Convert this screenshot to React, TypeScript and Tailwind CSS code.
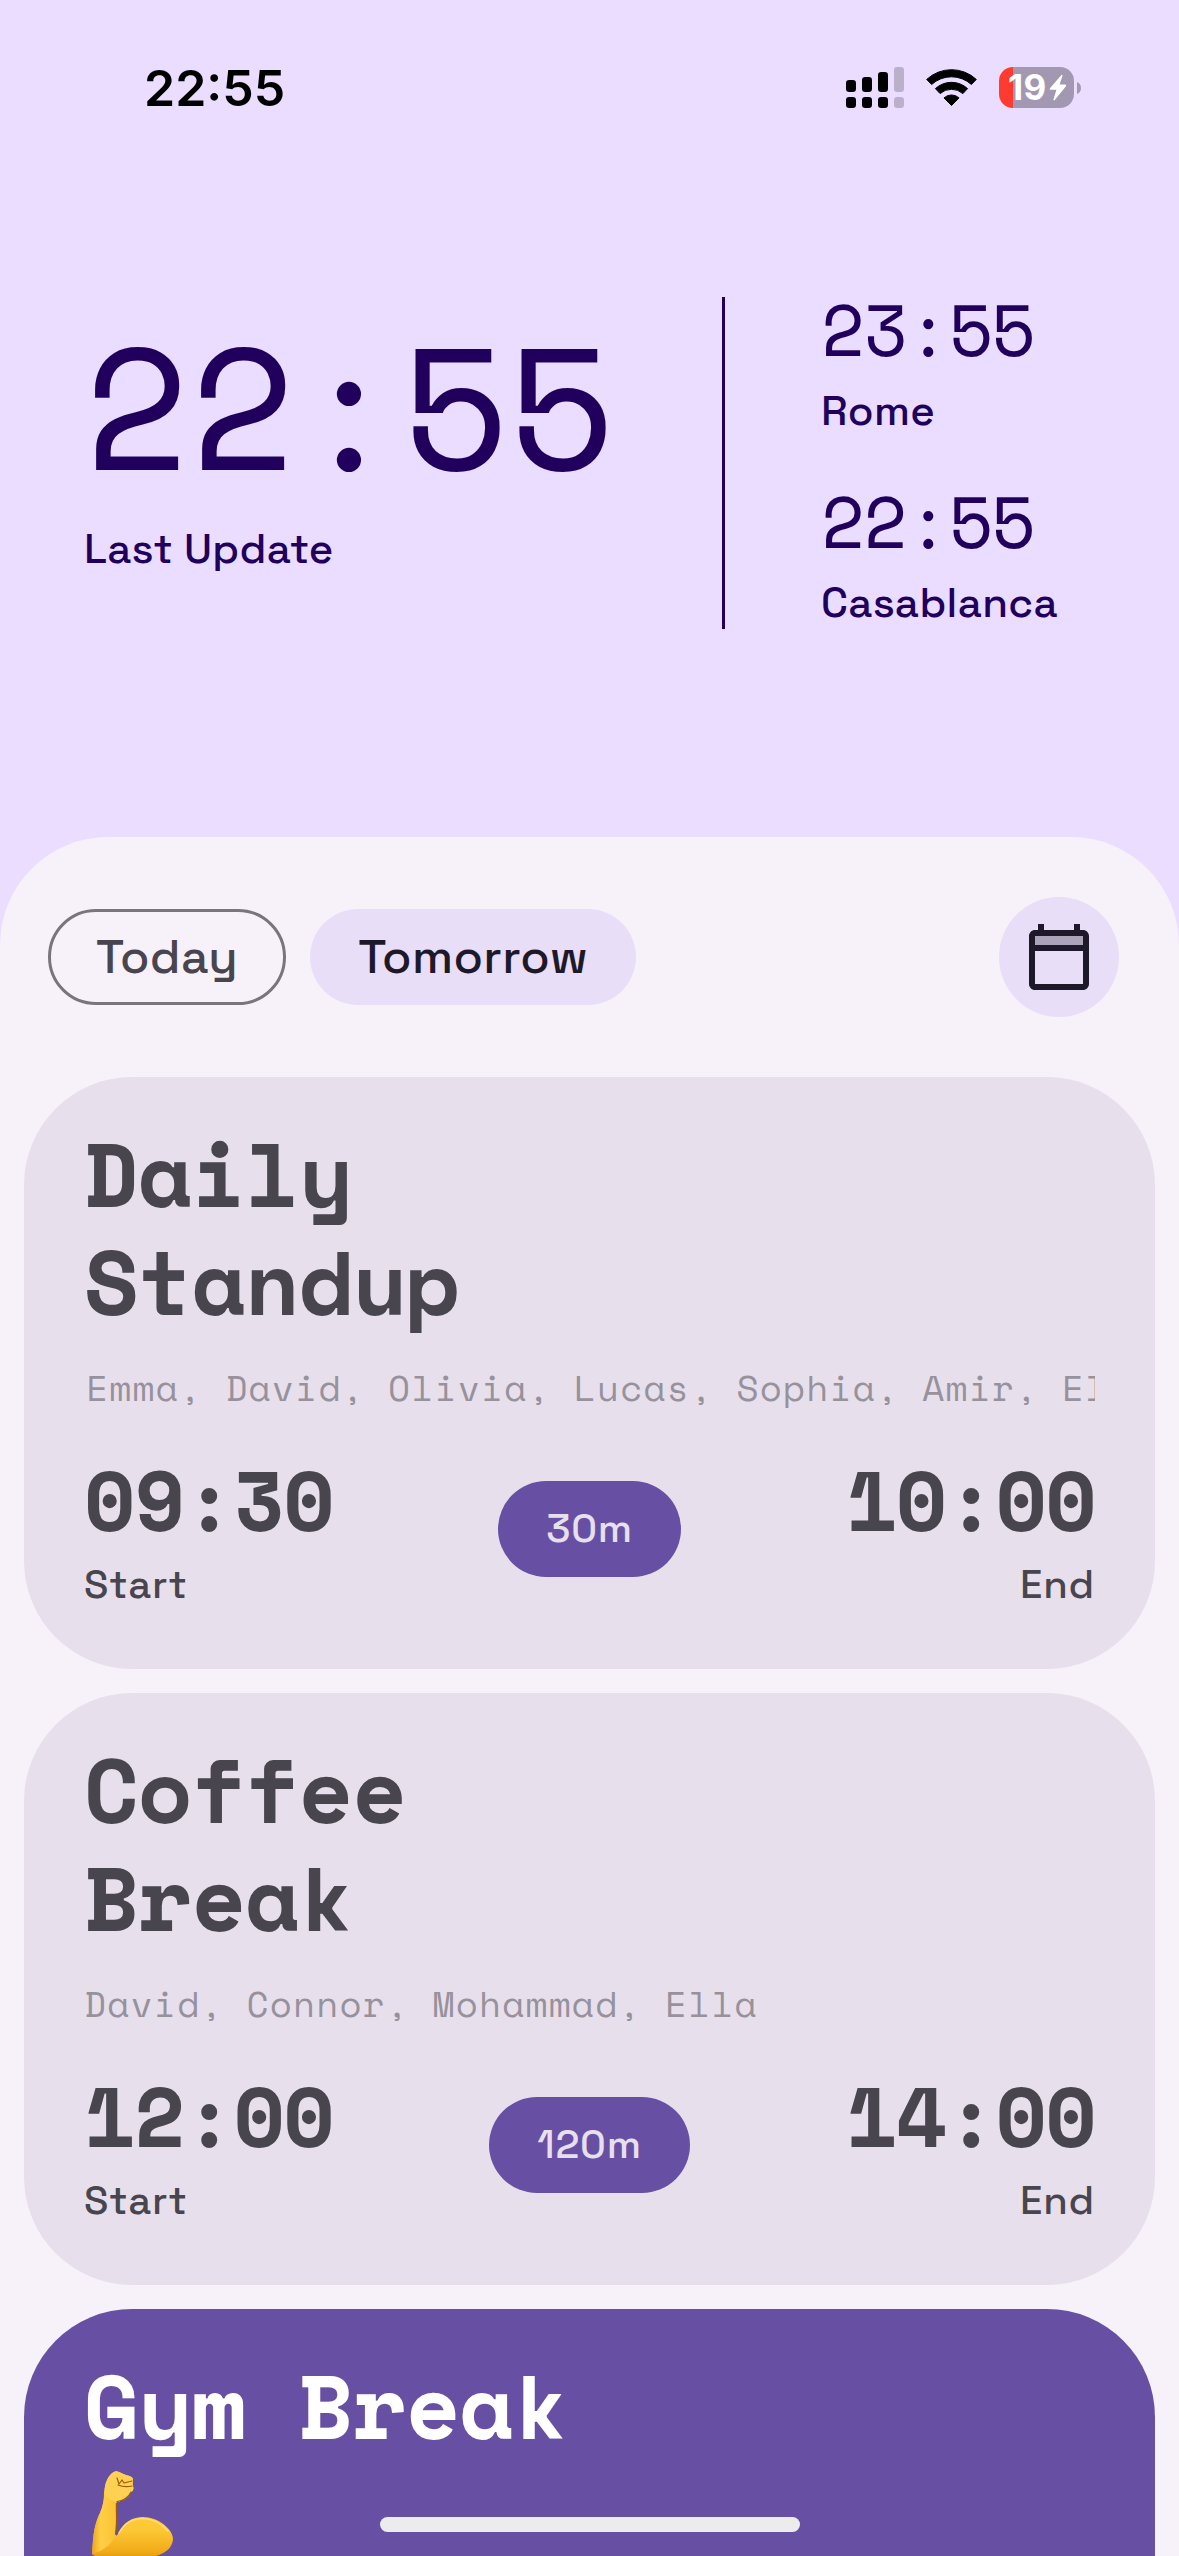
import React from "react";

type Tone = "muted" | "primary";

interface Meeting {
  title: React.ReactNode;
  people: string;
  start: string;
  end: string;
  duration: string;
  tone: Tone;
  scrolled?: boolean;
}

const MONO = "font-['Space_Mono','Liberation_Mono',monospace]";
const SANS = "font-['Space_Grotesk',Inter,sans-serif]";

function SignalIcon() {
  const bars = [
    { x: 0, y: 13, o: 1 },
    { x: 16, y: 10, o: 1 },
    { x: 32, y: 5, o: 1 },
    { x: 48, y: 0, o: 0.2 },
  ];
  return (
    <svg width="58" height="41" viewBox="0 0 58 41">
      {bars.map((b) => (
        <g key={b.x} opacity={b.o}>
          <rect x={b.x} y={b.y} width="10" height={25 - b.y} rx="3.2" />
          <rect x={b.x} y="30" width="10" height="11" rx="3.2" />
        </g>
      ))}
    </svg>
  );
}

function WifiIcon() {
  return (
    <svg width="51" height="38" viewBox="0 0 51 38" strokeLinejoin="round" stroke="#000" strokeWidth="1">
      <path d="M0.7 10.4A36.5 36.5 0 0 1 50.3 10.4L45.4 15.5A29.6 29.6 0 0 0 5.6 15.5Z" />
      <path d="M9.4 19.6A23.8 23.8 0 0 1 41.6 19.6L36.9 24.6A17.2 17.2 0 0 0 14.1 24.6Z" />
      <path d="M18 28.9A11 11 0 0 1 33 28.9L25.5 36.5Z" />
    </svg>
  );
}

function Battery() {
  return (
    <div className="flex items-center gap-[3px]">
      <div className="flex h-[41px] w-[75px] items-center overflow-hidden rounded-[14px] bg-[linear-gradient(90deg,#ff3b30_14px,#a398b2_14px)] pl-[9px] text-white">
        <span className="font-[Inter,sans-serif] text-[35px] leading-[41px] font-bold tracking-[0.5px]">19</span>
        <svg className="ml-[2px] shrink-0" width="18" height="27" viewBox="0 0 18 27">
          <path
            d="M12.4 1 0.8 14.4Q0.2 15.6 1.4 15.8H7.4L4.4 25.4Q4.6 26.8 5.8 26L17 12.2Q17.6 10.8 16.2 10.6H10.6L13.6 1.6Q13.2 0.4 12.4 1Z"
            fill="#fff"
          />
        </svg>
      </div>
      <svg width="4" height="14" viewBox="0 0 4 14">
        <path d="M0 1C5.300 2.500 5.300 11.500 0 13Z" fill="#a398b2" />
      </svg>
    </div>
  );
}

function StatusBar() {
  return (
    <div className="flex items-start justify-between pr-[98px] pl-[144px] text-black">
      <span className="mt-[58px] font-[Inter,sans-serif] text-[50px] leading-[60px] font-semibold">
        22:55
      </span>
      <div className="mt-[67px] flex h-[41px] items-center">
        <SignalIcon />
        <div className="ml-[22px]">
          <WifiIcon />
        </div>
        <div className="ml-[22px]">
          <Battery />
        </div>
      </div>
    </div>
  );
}

function CityClock({ time, city }: { time: string; city: string }) {
  return (
    <div className="flex flex-col gap-4">
      <span className={`${MONO} text-[72px] leading-[72px] tracking-[-1.5px]`}>{time}</span>
      <span className={`${SANS} text-[42px] leading-[60px] font-medium tracking-[0.3px]`}>{city}</span>
    </div>
  );
}

function Clocks() {
  return (
    <div className="flex h-[332px] items-center pl-[84px] text-[#21005d]">
      <div className="flex w-[638px] flex-col gap-7 pb-[30px]">
        <span className={`${MONO} text-[173px] leading-[173px] tracking-[0.1px]`}>22:55</span>
        <span className={`${SANS} text-[42px] leading-[60px] font-medium tracking-[0.3px]`}>Last Update</span>
      </div>
      <div className="mr-24 h-full w-[3px] bg-[#21005d]" />
      <div className="flex flex-col gap-11">
        <CityClock time="23:55" city="Rome" />
        <CityClock time="22:55" city="Casablanca" />
      </div>
    </div>
  );
}

function CalendarIcon() {
  return (
    <svg width="72" height="72" viewBox="0 0 24 24" shapeRendering="geometricPrecision">
      <path d="M4 5h16v3H4z" fill="#1d192b" fillOpacity="0.3" />
      <path
        fill="#1d192b"
        fillRule="evenodd"
        d="M5 1h2v2h10V1h2v2h1c1.100 0 2 .9 2 2v16c0 1.100-.9 2-2 2H4c-1.100 0-2-.9-2-2V5c0-1.100.9-2 2-2h1zM4 5v3h16V5zM4 10v11h16V10z"
      />
    </svg>
  );
}

function Toolbar() {
  return (
    <div className="flex h-[120px] items-center justify-between pr-[60px] pl-12">
      <div className={`${SANS} flex gap-6 text-[48px] leading-[60px] font-medium tracking-[0.35px]`}>
        <button className="flex h-24 items-center rounded-full border-[3px] border-[#79747e] px-[45px] text-[#49454f]">
          Today
        </button>
        <button className="flex h-24 items-center rounded-full bg-[#e8def8] px-12 text-[#1d192b]">Tomorrow</button>
      </div>
      <button className="flex size-[120px] items-center justify-center rounded-full bg-[#e8def8]">
        <CalendarIcon />
      </button>
    </div>
  );
}

function TimeLabel({ time, label, right }: { time: string; label: string; right?: boolean }) {
  return (
    <div className={right ? "flex flex-col items-end" : "flex flex-col items-start"}>
      <span className={`${MONO} text-[84px] leading-[84px] font-bold tracking-[-1.6px]`}>{time}</span>
      <span className={`${SANS} mt-5 text-[40px] leading-[48px] font-medium tracking-[0.8px]`}>{label}</span>
    </div>
  );
}

function MeetingCard({ m }: { m: Meeting }) {
  return (
    <div
      className={
        m.tone === "muted"
          ? "h-[592px] shrink-0 rounded-[108px] bg-[#e7e0ec] px-[60px] pt-[42px] text-[#49454f]"
          : "h-[592px] shrink-0 rounded-[108px] bg-[#6750a4] px-[60px] pt-[42px] text-white"
      }
    >
      <h2 className={`${MONO} h-[216px] text-[90px] leading-[108px] font-bold tracking-[-1.5px]`}>{m.title}</h2>
      <p
        className={`${MONO} mt-[26px] overflow-hidden text-[36px] leading-[54px] tracking-[1.2px] whitespace-nowrap opacity-50 ${m.scrolled ? "pl-[2px]" : ""}`}
      >
        {m.people}
      </p>
      <div className="mt-[42px] grid grid-cols-[1fr_auto_1fr] items-start">
        <TimeLabel time={m.start} label="Start" />
        <span
          className={`${SANS} mt-6 flex h-24 items-center rounded-full bg-[#6750a4] px-12 text-[40px] font-medium tracking-[0.75px] text-[#e7e0ec]`}
        >
          {m.duration}
        </span>
        <TimeLabel time={m.end} label="End" right />
      </div>
    </div>
  );
}

function FlexedArm() {
  return (
    <svg className="mt-3 ml-[7px] block" width="84" height="92" viewBox="0 0 84 92" role="img" aria-label="Flexed biceps">
      <defs>
        <linearGradient id="skin" x1="0" y1="0" x2="0" y2="1">
          <stop offset="0" stopColor="#ffd04a" />
          <stop offset="0.65" stopColor="#fdc835" />
          <stop offset="0.9" stopColor="#f0aa18" />
          <stop offset="1" stopColor="#d98a0a" />
        </linearGradient>
        <linearGradient id="forearm" x1="0" y1="0" x2="1" y2="0">
          <stop offset="0" stopColor="#eda51a" />
          <stop offset="0.35" stopColor="#ffce45" />
          <stop offset="1" stopColor="#fbc234" />
        </linearGradient>
      </defs>
      <path
        d="M1 83C2 66 3 54 9 42C12 35 13 29 13 22C14 12 18 3 24 0.500C27 -0.500 31 3 35 4C39 5 42 6 42 9C42 11 41 12 42 15C43 18 42 20 40 21C38 27 31 30 26 31C24 38 26 50 24 62C25 66 26 65 28 61C33 51 42 46 52 46C67 46 82 58 82 68C81 80 70 84 56 88C38 92 10 91 1 83Z"
        fill="url(#skin)"
      />
      <path
        d="M1 83C2 66 3 54 9 42C12 35 13 29 14 22C18 28 22 30 26 31C24 38 26 50 24 65C22 71 17 76 9 80Z"
        fill="url(#forearm)"
      />
      <path
        d="M14 15C15 9 19 2 24 0.500C27 -0.500 31 3 35 4C39 5 42 6 42 9C42 11 41 12 42 15C43 18 42 20 40 21C38 27 31 30 26 31C20 30 15 26 13.500 22Z"
        fill="#ffd152"
      />
      <path
        d="M26 7L28 13L31 9L33 12L41 10M27 14C32 16 36 16 41 15M26 30.500C32 30 38 26 40 21M25.500 32C25 42 26.500 52 24.500 63"
        fill="none"
        stroke="#9c5a05"
        strokeWidth="1.200"
        strokeLinecap="round"
        strokeLinejoin="round"
      />
      <path d="M28 62C34 51 43 47.500 52 47.500C62 48 71 53 77 60" fill="none" stroke="#ffdc70" strokeWidth="1.500" strokeLinecap="round" />
    </svg>
  );
}

const meetings: Meeting[] = [
  {
    title: (
      <>
        Daily
        <br />
        Standup
      </>
    ),
    people: "Emma, David, Olivia, Lucas, Sophia, Amir, Ella",
    start: "09:30",
    end: "10:00",
    duration: "30m",
    tone: "muted",
    scrolled: true,
  },
  {
    title: (
      <>
        Coffee
        <br />
        Break
      </>
    ),
    people: "David, Connor, Mohammad, Ella",
    start: "12:00",
    end: "14:00",
    duration: "120m",
    tone: "muted",
  },
];

export default function App() {
  return (
    <div className="relative flex h-[2556px] w-[1179px] flex-col overflow-hidden bg-[#eaddff]">
      <div className="h-[297px] shrink-0">
        <StatusBar />
      </div>
      <Clocks />
      <main className="mt-[208px] flex h-[1719px] shrink-0 flex-col overflow-hidden rounded-t-[108px] bg-[#f7f2fa] pt-[60px]">
        <Toolbar />
        <div className="mt-[60px] flex flex-col gap-6 px-6">
          {meetings.map((m) => (
            <MeetingCard key={m.start} m={m} />
          ))}
          <div className="h-[592px] shrink-0 rounded-[108px] bg-[#6750a4] px-[60px] pt-[42px] text-white">
            <h2 className={`${MONO} text-[90px] leading-[108px] font-bold tracking-[-1.5px]`}>
              Gym Break
              <FlexedArm />
            </h2>
          </div>
        </div>
      </main>
      <div className="absolute bottom-6 left-[380px] h-[15px] w-[420px] rounded-full bg-[#ececec]" />
    </div>
  );
}
